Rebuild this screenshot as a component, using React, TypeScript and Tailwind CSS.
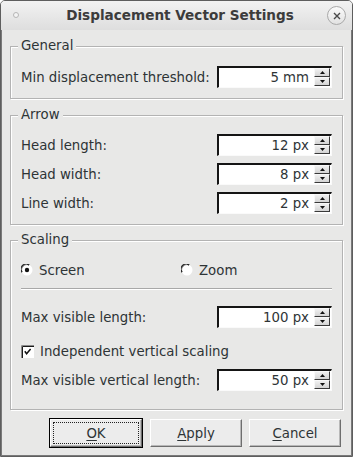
import React from "react";

const TXT = "text-[#2e3436]";

function SpinBtn({ up }: { up?: boolean }) {
  return (
    <div className="flex h-[9px] w-[16px] items-center justify-center border border-t-[#f8f8f8] border-l-[#f8f8f8] border-b-[#3a3a3a] border-r-[#3a3a3a] bg-gradient-to-b from-[#f0f0f0] to-[#d4d4d4]">
      <svg width="5" height="3" viewBox="0 0 5 3">
        {up ? <path d="M2.5 0 L5 3 L0 3 Z" fill="#111" /> : <path d="M0 0 L5 0 L2.5 3 Z" fill="#111" />}
      </svg>
    </div>
  );
}

function Spin({ value }: { value: string }) {
  return (
    <div className="flex h-[22px] w-[115px] items-stretch border-t-2 border-l-2 border-b border-r border-t-[#151515] border-l-[#151515] border-b-[#fafafa] border-r-[#fafafa] bg-white">
      <span className={`flex flex-1 items-center justify-end pr-[5px] pt-[1px] text-[13.3px] leading-none ${TXT}`}>{value}</span>
      <div className="mr-[1px] flex flex-col justify-start">
        <SpinBtn up />
        <SpinBtn />
      </div>
    </div>
  );
}

function Row({ label, value }: { label: string; value: string }) {
  return (
    <div className="flex h-[22px] items-center justify-between">
      <span className={`pt-[1px] text-[13.3px] leading-none ${TXT}`}>{label}</span>
      <Spin value={value} />
    </div>
  );
}

function Group({ title, className, children }: { title: string; className?: string; children: React.ReactNode }) {
  return (
    <div className={`relative border border-[#b3b3b3] shadow-[inset_1px_1px_0_#ffffff,1px_1px_0_#ffffff] px-[10px] ${className ?? ""}`}>
      <span className={`absolute -top-[9px] left-[7px] bg-[#e8e8e7] px-[3px] text-[13.3px] leading-[16px] ${TXT}`}>{title}</span>
      {children}
    </div>
  );
}

function Radio({ checked }: { checked?: boolean }) {
  return (
    <svg width="12" height="12" viewBox="0 0 12 12">
      <circle cx="6" cy="6" r="5.5" fill="#ffffff" />
      <path d="M1 8.2 A5.2 5.2 0 0 1 8.2 1" stroke="#2a2a2a" strokeWidth="1.6" fill="none" />
      <path d="M0.6 6 A5.4 5.4 0 0 1 6 0.6" stroke="#8a8a8a" strokeWidth="0.8" fill="none" />
      {checked && <circle cx="6" cy="6" r="2.2" fill="#111" />}
    </svg>
  );
}

function Check() {
  return (
    <svg width="13" height="13" viewBox="0 0 13 13">
      <rect x="0" y="0" width="13" height="13" fill="#ffffff" />
      <path d="M0.5 13 V0.5 H13" stroke="#8a8a8a" strokeWidth="1" fill="none" />
      <path d="M1.5 13 V1.5 H13" stroke="#1a1a1a" strokeWidth="1" fill="none" />
      <path d="M3.8 6.2 L5.6 8.8 L9.6 4" stroke="#111" strokeWidth="1.5" fill="none" />
    </svg>
  );
}

function Btn({ children }: { children: React.ReactNode }) {
  return (
    <div
      className={`flex h-[28px] w-[92px] items-center justify-center border border-t-[#ffffff] border-l-[#ffffff] border-b-[#6e6e6e] border-r-[#6e6e6e] bg-[#ececec] shadow-[inset_-1px_-1px_0_#b8b8b8] pt-[1px] text-[13.3px] leading-none ${TXT}`}
    >
      {children}
    </div>
  );
}

export default function App() {
  return (
    <div className="h-[457px] w-[353px] bg-white font-['DejaVu_Sans',sans-serif]">
      <div className="flex h-[457px] w-[353px] flex-col overflow-hidden rounded-t-[5px] border border-[#5e5e5e] bg-[#e8e8e7]">
        {/* title bar */}
        <div className="relative flex h-[29px] shrink-0 items-center justify-center bg-gradient-to-b from-[#f2f2f2] to-[#dedede]">
          <div className="absolute left-[12px] top-[11px] h-[6px] w-[6px] rounded-full border border-[#b5b5b5] bg-[#f4f4f4]" />
          <span className="ml-[7px] text-[13.6px] font-bold leading-none text-[#3c3c3c]">Displacement Vector Settings</span>
          <div className="absolute right-[6px] top-[5px] flex h-[19px] w-[19px] items-center justify-center rounded-full border border-[#a9a9a9] bg-gradient-to-b from-[#fbfbfb] to-[#e2e2e2]">
            <svg width="8" height="8" viewBox="0 0 8 8">
              <path d="M1 1 L7 7 M7 1 L1 7" stroke="#4a4a4a" strokeWidth="1.4" />
            </svg>
          </div>
        </div>
        {/* body */}
        <div className="flex flex-1 flex-col border-x border-b border-[#7a7a7a] px-[8px]">
          <Group title="General" className="mt-[16px] pt-[19px] pb-[10px]">
            <Row label="Min displacement threshold:" value="5 mm" />
          </Group>
          <Group title="Arrow" className="mt-[16px] pt-[18px] pb-[10px]">
            <div className="flex flex-col gap-[7px]">
              <Row label="Head length:" value="12 px" />
              <Row label="Head width:" value="8 px" />
              <Row label="Line width:" value="2 px" />
            </div>
          </Group>
          <Group title="Scaling" className="mt-[15px] pt-[19px] pb-[18px]">
            <div className="grid h-[20px] grid-cols-[160px_1fr] items-center">
              <div className="flex items-center gap-[6px]">
                <Radio checked />
                <span className={`pt-[1px] text-[13.3px] leading-none ${TXT}`}>Screen</span>
              </div>
              <div className="flex items-center gap-[6px]">
                <Radio />
                <span className={`pt-[1px] text-[13.3px] leading-none ${TXT}`}>Zoom</span>
              </div>
            </div>
            <div className="mt-[8px] h-px bg-[#a8a8a8] shadow-[0_1px_0_#ffffff]" />
            <div className="mt-[17px]">
              <Row label="Max visible length:" value="100 px" />
            </div>
            <div className="mt-[13px] flex h-[20px] items-center gap-[6px]">
              <Check />
              <span className={`pt-[1px] text-[13.3px] leading-none ${TXT}`}>Independent vertical scaling</span>
            </div>
            <div className="mt-[8px]">
              <Row label="Max visible vertical length:" value="50 px" />
            </div>
          </Group>
          <div className="mt-[8px] flex items-center justify-end gap-[7px] pr-[2px]">
            <div className="border border-black">
              <div className="relative">
                <Btn>
                  <span>
                    <u className="underline-offset-2">O</u>K
                  </span>
                </Btn>
                <div className="pointer-events-none absolute inset-[3px] border border-dotted border-[#222]" />
              </div>
            </div>
            <Btn>
              <span>
                <u className="underline-offset-2">A</u>pply
              </span>
            </Btn>
            <Btn>
              <span>
                <u className="underline-offset-2">C</u>ancel
              </span>
            </Btn>
          </div>
        </div>
      </div>
    </div>
  );
}
